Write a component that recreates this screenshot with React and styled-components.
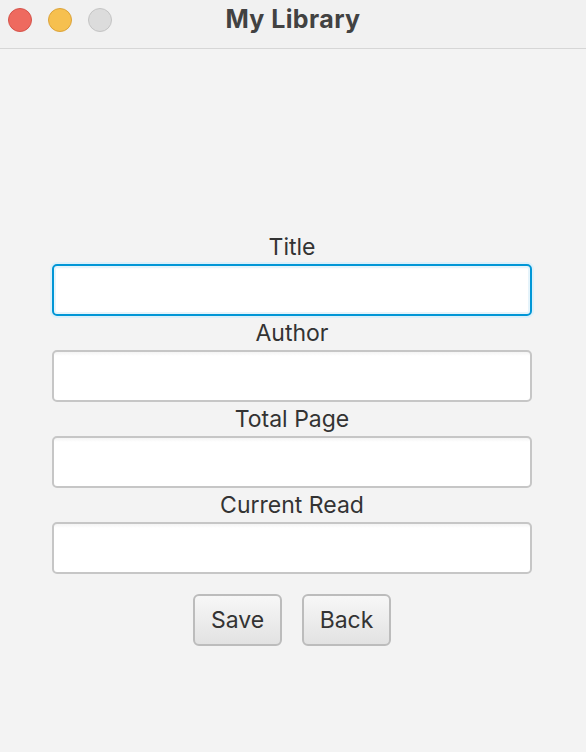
import React from "react";
import styled, { createGlobalStyle } from "styled-components";

const GlobalStyle = createGlobalStyle`
  html, body {
    margin: 0;
    padding: 0;
    background: #f3f3f3;
  }
  * {
    box-sizing: border-box;
  }
`;

const StyledWindow = styled.div`
  width: 586px;
  height: 752px;
  display: flex;
  flex-direction: column;
  background: #f3f3f3;
  font-family: "Inter", "Liberation Sans", sans-serif;
  overflow: hidden;
`;

const StyledTitleBar = styled.div`
  position: relative;
  height: 49px;
  flex-shrink: 0;
  display: flex;
  align-items: flex-start;
  justify-content: center;
  background: #f1f1f1;
  border-bottom: 1px solid #d6d6d6;
`;

const StyledLights = styled.div`
  position: absolute;
  left: 8px;
  top: 8px;
  display: flex;
  gap: 16px;
`;

const StyledLight = styled.span`
  width: 24px;
  height: 24px;
  border-radius: 50%;
  background: ${(props) => props.$fill};
  border: 1px solid ${(props) => props.$edge};
`;

const StyledWindowTitle = styled.h1`
  margin: 0;
  padding: 4px 0 0 0;
  line-height: 30px;
  font-size: 25px;
  font-weight: 700;
  letter-spacing: 0.4px;
  color: #424242;
`;

const StyledForm = styled.form`
  display: flex;
  flex-direction: column;
  width: 480px;
  margin: 181px 0 0 52px;
`;

const StyledLabel = styled.label`
  display: block;
  height: 34px;
  line-height: 34px;
  text-align: center;
  font-size: 23px;
  color: #333333;
`;

const StyledInput = styled.input`
  display: block;
  width: 100%;
  height: 52px;
  margin: 0;
  padding: 0 10px;
  border-radius: 5px;
  font-family: inherit;
  font-size: 20px;
  outline: none;
  background: linear-gradient(#f4f4f4 0px, #ffffff 4px);
  border: ${(props) => (props.$focused ? "2px solid #0096d6" : "2px solid #c6c6c6")};
  box-shadow: ${(props) =>
    props.$focused ? "0 0 0 2px #dcf0fa, inset 0 0 0 2px #e6f4fb" : "none"};
`;

const StyledButtons = styled.div`
  display: flex;
  justify-content: center;
  gap: 20px;
  margin-top: 20px;
`;

const StyledButton = styled.button`
  width: 89px;
  height: 52px;
  border: 2px solid #bcbcbc;
  border-radius: 6px;
  background: linear-gradient(#f7f7f7, #e2e2e2);
  font-family: inherit;
  font-size: 23px;
  color: #333333;
  padding: 0;
  cursor: pointer;
`;

const fields = [
  { id: "title", label: "Title", focused: true },
  { id: "author", label: "Author" },
  { id: "total", label: "Total Page" },
  { id: "current", label: "Current Read" },
];

const App = () => {
  return (
    <>
      <GlobalStyle />
      <StyledWindow>
        <StyledTitleBar>
          <StyledLights>
            <StyledLight $fill="#ee6a5f" $edge="#d5534a" />
            <StyledLight $fill="#f6c04f" $edge="#dca33a" />
            <StyledLight $fill="#dcdcdc" $edge="#c4c4c4" />
          </StyledLights>
          <StyledWindowTitle>My Library</StyledWindowTitle>
        </StyledTitleBar>
        <StyledForm onSubmit={(e) => e.preventDefault()}>
          {fields.map((field) => (
            <div key={field.id}>
              <StyledLabel htmlFor={field.id}>{field.label}</StyledLabel>
              <StyledInput id={field.id} type="text" $focused={field.focused} />
            </div>
          ))}
          <StyledButtons>
            <StyledButton type="button">Save</StyledButton>
            <StyledButton type="button">Back</StyledButton>
          </StyledButtons>
        </StyledForm>
      </StyledWindow>
    </>
  );
};

export default App;
